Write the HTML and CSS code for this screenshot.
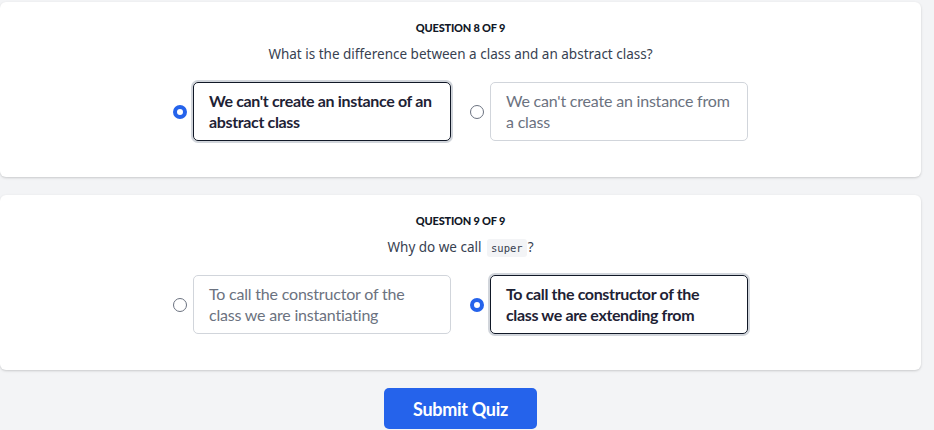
FILE: index.html
```html
<!DOCTYPE html>
<html>
<head>
<meta charset="utf-8">
<link rel="stylesheet" href="styles.css">
</head>
<body>
<div class="page">
  <section class="card">
    <div class="qnum">Question 8 of 9</div>
    <div class="qtext">What is the difference between a class and an abstract class?</div>
    <div class="options">
      <label class="opt">
        <span class="radio on"></span>
        <span class="box sel">We can't create an instance of an<br>abstract class</span>
      </label>
      <label class="opt">
        <span class="radio"></span>
        <span class="box">We can't create an instance from<br>a class</span>
      </label>
    </div>
  </section>
  <section class="card">
    <div class="qnum">Question 9 of 9</div>
    <div class="qtext">Why do we call <code class="code">super</code>?</div>
    <div class="options">
      <label class="opt">
        <span class="radio"></span>
        <span class="box">To call the constructor of the<br>class we are instantiating</span>
      </label>
      <label class="opt">
        <span class="radio on"></span>
        <span class="box sel">To call the constructor of the<br>class we are extending from</span>
      </label>
    </div>
  </section>
  <div class="actions">
    <button class="submit">Submit Quiz</button>
  </div>
</div>
</body>
</html>
```

FILE: styles.css
```css
html, body {
  margin: 0;
  padding: 0;
  background: #f3f4f6;
}
body {
  font-family: "Lato", "Noto Sans", sans-serif;
  color: #1f2937;
}
.page {
  width: 921px;
  padding-top: 2px;
  display: flex;
  flex-direction: column;
  gap: 18px;
}
.card {
  background: #fff;
  border-radius: 6px;
  box-shadow: 0 1px 3px rgba(0,0,0,0.12), 0 1px 2px rgba(0,0,0,0.06);
  padding: 18px 0 36px;
  display: flex;
  flex-direction: column;
  align-items: center;
}
.qnum {
  font-family: "Lato", sans-serif;
  font-weight: 900;
  font-size: 11px;
  text-transform: uppercase;
  color: #111827;
  letter-spacing: -0.2px;
  line-height: 16px;
}
.qtext {
  margin-top: 8px;
  font-family: "Noto Sans", sans-serif;
  font-size: 13.5px;
  color: #374151;
  line-height: 20px;
  height: 20px;
}
.code {
  font-family: "DejaVu Sans Mono", monospace;
  font-size: 10.5px;
  line-height: 1;
  background: #f3f4f6;
  color: #374151;
  border-radius: 3px;
  padding: 3px 4px;
  margin: 0 1px 0 2px;
}
.options {
  margin-top: 18px;
  display: flex;
  gap: 19px;
}
.opt {
  display: flex;
  align-items: center;
  gap: 6px;
}
.radio {
  width: 14px;
  height: 14px;
  border-radius: 50%;
  border: 1px solid #6b7280;
  box-sizing: border-box;
  background: #fff;
}
.radio.on {
  border: 4.5px solid #2563eb;
  background: #fff;
}
.box {
  box-sizing: border-box;
  width: 258px;
  height: 59px;
  padding: 7px 15px;
  border: 1px solid #d1d5db;
  border-radius: 5px;
  font-family: "Lato", sans-serif;
  font-size: 16px;
  line-height: 21px;
  color: #6b7280;
  letter-spacing: -0.2px;
  white-space: nowrap;
}
.box.sel {
  border: 1.5px solid #111827;
  box-shadow: 0 0 0 2px #d1d5db;
  color: #1e2235;
  font-weight: 700;
  letter-spacing: -0.35px;
}
.actions {
  display: flex;
  justify-content: center;
}
.submit {
  width: 153px;
  height: 41px;
  border: 0;
  border-radius: 5px;
  background: #2563eb;
  color: #fff;
  font-family: "Lato", sans-serif;
  font-weight: 700;
  font-size: 18px;
  letter-spacing: -0.3px;
}
```
